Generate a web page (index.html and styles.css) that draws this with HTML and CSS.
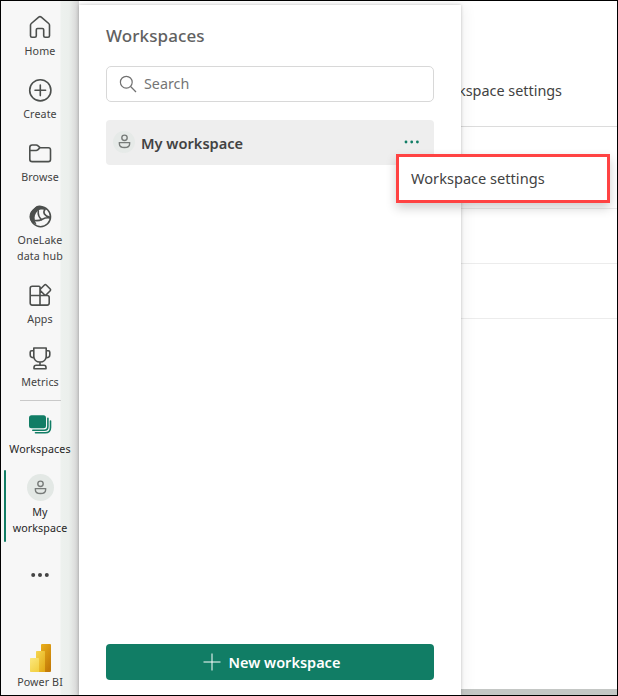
FILE: index.html
```html
<!DOCTYPE html>
<html lang="en">
<head>
<meta charset="utf-8">
<title>Power BI</title>
<link rel="stylesheet" href="styles.css">
</head>
<body>
<div class="window">
  <nav class="rail">
    <a class="item"><svg class="icon" viewBox="0 0 24 24"><path d="M2.500 10.200c0-.7.3-1.300.8-1.700l7.400-6.300c.8-.7 1.800-.7 2.600 0l7.400 6.300c.5.4.8 1 .8 1.700v10.600c0 .9-.6 1.500-1.500 1.500h-2.800c-.9 0-1.500-.6-1.500-1.500v-6c0-.8-.5-1.300-1.300-1.300H9.600c-.8 0-1.300.5-1.300 1.300v6c0 .9-.6 1.500-1.500 1.500H4c-.9 0-1.500-.6-1.500-1.500z"/></svg><span class="label">Home</span></a>
    <a class="item"><svg class="icon" viewBox="0 0 24 24"><circle cx="12.300" cy="12.300" r="10.600"/><path d="M12.300 7v10.600M7 12.300h10.600"/></svg><span class="label">Create</span></a>
    <a class="item"><svg class="icon" viewBox="0 0 24 24"><path d="M1.800 6.500C1.800 5 2.800 4 4.200 4h4c.6 0 1.200.2 1.600.6L12 6.700h8.400c1.200 0 2.100.9 2.100 2.100v9.700c0 1.200-.9 2.100-2.100 2.100H4.200c-1.400 0-2.400-1-2.400-2.400zM1.800 9.500h6.300c.7 0 1.200-.2 1.700-.7L12 6.700"/></svg><span class="label">Browse</span></a>
    <a class="item"><svg class="icon" viewBox="0 0 24 24"><circle cx="12.600" cy="12.800" r="9.900"/><path class="solid" d="M6.500 4.500C8 .3 16 .3 17.500 6c-3-.8-5.500-.7-7.700.8C7 9.500 6 13 7 16.500c.3 1.300.8 2.300 1.500 3.700C4 19.500 1.500 16.500 1.500 12.500 1.500 9 3.500 6 6.500 4.500z"/><path d="M10.300 6.800c-.5 4 .8 6.700 3.500 9M7.500 16.500c6.500 1 7.500-4 14.500-2.500M17 5.500c-2.500 3-.5 6.500 4.500 7.500"/></svg><span class="label">OneLake<br>data hub</span></a>
    <a class="item"><svg class="icon" viewBox="0 0 24 24"><path d="M12 12.500V4.200c0-.6-.3-.9-.9-.9H4.300C3 3.300 2.200 4.100 2.200 5.300v14.800c0 1.200.8 2 2 2h15c1.200 0 2-.8 2-2v-5.700c0-1.100-.8-1.900-1.900-1.900zM2.200 12.500H12v9.600M16.500 2c.5-.5 1.200-.5 1.700 0l4 4c.5.5.5 1.200 0 1.700l-4 4c-.5.5-1.200.5-1.700 0l-4-4c-.5-.5-.5-1.200 0-1.700z"/></svg><span class="label">Apps</span></a>
    <a class="item last"><svg class="icon" viewBox="0 0 24 24"><path d="M5.800 2h12.400v8.200c0 3.400-2.600 5.800-6.200 5.800s-6.200-2.400-6.200-5.800zM5.800 4.700H3.700c-.9 0-1.500.6-1.500 1.500v2.600c0 1.700 1.300 3 3.600 3M18.200 4.700h2.100c.9 0 1.500.6 1.500 1.500v2.600c0 1.700-1.300 3-3.600 3M12 16v3.300M6 22.700v-1.200c0-1.300.9-2.200 2.200-2.200h7.600c1.300 0 2.200.9 2.200 2.200v1.200z"/></svg><span class="label">Metrics</span></a>
    <hr class="rule">
    <a class="item"><svg class="icon stack" viewBox="0 0 24 24"><rect x="1" y="2.300" width="17" height="13" rx="2.500"/><path d="M4.800 17.300h11.400c2.400 0 3.700-1.300 3.700-3.700V5.200M7.500 19.800h9.700c3.300 0 5.300-2 5.300-5.300V8"/></svg><span class="label dark">Workspaces</span></a>
    <a class="item current"><span class="avatar"><svg class="person" viewBox="0 0 14 16"><circle cx="7" cy="4" r="2.900"/><path d="M1.500 9.200h11v1.500c0 2.200-2.300 3.800-5.500 3.800s-5.500-1.600-5.500-3.800z"/></svg></span><span class="label dark">My<br>workspace</span></a>
    <svg class="dots" viewBox="0 0 20 6"><circle cx="3.200" cy="3" r="2"/><circle cx="10" cy="3" r="2"/><circle cx="16.800" cy="3" r="2"/></svg>
    <a class="item brand"><svg class="powerbi" viewBox="0 0 21 28">
      <defs><linearGradient id="g1" x2=".6" y2="1"><stop stop-color="#eab01c"/><stop offset="1" stop-color="#c47b08"/></linearGradient><linearGradient id="g2" x2=".8" y2="1"><stop stop-color="#f6d650"/><stop offset="1" stop-color="#e4ac19"/></linearGradient><linearGradient id="g3" x2=".6" y2="1"><stop stop-color="#fbe77d"/><stop offset="1" stop-color="#f3d247"/></linearGradient></defs>
      <rect x="11" width="10" height="28" rx="1" fill="url(#g1)"/><path d="M6 8c0-.6.4-1 1-1h7c.6 0 1 .4 1 1v20H6z" fill="url(#g2)"/><path d="M0 15c0-.6.4-1 1-1h7c.6 0 1 .4 1 1v13H1c-.6 0-1-.4-1-1z" fill="url(#g3)"/></svg><span class="label">Power BI</span></a>
  </nav>
  <section class="panel">
    <h1 class="title">Workspaces</h1>
    <div class="search"><svg class="glass" viewBox="0 0 18 18"><circle cx="7.300" cy="7.200" r="5.900"/><path d="M11.600 11.500L17 17"/></svg><span class="placeholder">Search</span></div>
    <div class="row">
      <span class="avatar small"><svg class="person" viewBox="0 0 14 16"><circle cx="7" cy="4" r="2.900"/><path d="M1.500 9.200h11v1.500c0 2.200-2.300 3.800-5.500 3.800s-5.500-1.600-5.500-3.800z"/></svg></span>
      <span class="name">My workspace</span>
      <svg class="more" viewBox="0 0 16 4"><circle cx="2" cy="2" r="1.400"/><circle cx="7.700" cy="2" r="1.400"/><circle cx="13.400" cy="2" r="1.400"/></svg>
      <div class="menu">Workspace settings</div>
    </div>
    <button class="new"><svg class="plus" viewBox="0 0 18 18"><path d="M9 .5v17M.5 9h17"/></svg><span>New workspace</span></button>
  </section>
  <main class="content">
    <header class="toolbar"><span class="tool">kspace settings</span></header>
    <div class="line first"></div>
    <div class="line"></div>
    <div class="line"></div>
    <div class="scrollbar"></div>
  </main>
</div>
</body>
</html>
```
FILE: styles.css
```css
* { box-sizing: border-box; }
body { margin: 0; font-family: "Noto Sans", "Open Sans", sans-serif; color: #424242; }
.window {
  display: grid;
  grid-template-columns: 78px 382px 156px;
  width: 618px;
  height: 696px;
  border: 1px solid #000;
  background: #fff;
  overflow: hidden;
}
.rail {
  display: flex;
  flex-direction: column;
  align-items: center;
  padding: 14px 0 0;
  background: linear-gradient(90deg, #f7f7f7 59px, #edf1ee 60px, #ebefec 68px, #e0e1e0 74px, #d4d4d4 78px);
}
.item {
  display: flex;
  flex-direction: column;
  align-items: center;
  gap: 4px;
  width: 78px;
  padding-bottom: 19px;
}
.item.last { padding-bottom: 10px; }
.icon { width: 24px; height: 24px; fill: none; stroke: #4c4f4d; stroke-width: 1.6; stroke-linejoin: round; stroke-linecap: round; }
.icon .solid { fill: #4c4f4d; stroke: none; }
.label { font-size: 10.7px; line-height: 16px; letter-spacing: .1px; text-align: center; white-space: nowrap; }
.dark { color: #262626; }
.rule { width: 41px; height: 1px; margin: 0 0 12px; border: 0; background: #c9c9c9; }
.icon.stack { stroke: #117d65; }
.stack rect { fill: #117d65; stroke: none; }
.avatar { display: grid; place-items: center; width: 27px; height: 27px; border-radius: 50%; background: #e3e8e5; }
.person { width: 13px; height: 15px; fill: none; stroke: #777b79; stroke-width: 1.5; }
.current { position: relative; margin-top: -2px; padding-bottom: 0; gap: 3px; }
.current::before { content: ""; position: absolute; left: 3px; top: -4px; width: 2px; height: 72px; border-radius: 1px; background: #117d65; }
.dots { width: 20px; height: 6px; margin-top: 36px; fill: #444; }
.brand { margin-top: 66px; padding: 0; gap: 2px; }
.powerbi { width: 21px; height: 28px; }
.panel {
  display: flex;
  flex-direction: column;
  position: relative;
  z-index: 1;
  margin-top: 4px;
  padding: 19px 27px 15px;
  background: #fff;
  box-shadow: 0 0 3px #00000038, 2px 0 14px #00000012;
}
.title { margin: 0; font-size: 17px; line-height: 24px; font-weight: 500; letter-spacing: .1px; color: #616161; }
.search { display: flex; align-items: center; gap: 7px; height: 36px; margin-top: 18px; padding: 0 12px; border: 1px solid #d8d8d8; border-radius: 5px; }
.glass { width: 18px; height: 18px; fill: none; stroke: #707070; stroke-width: 1.2; }
.placeholder { padding-bottom: 1px; font-size: 14.3px; color: #757575; }
.row { position: relative; display: flex; align-items: center; height: 45px; margin-top: 18px; padding: 0 14px 0 7px; border-radius: 4px; background: #eee; }
.small { width: 22px; height: 22px; margin-top: -2px; background: #e6eae8; }
.small .person { width: 13px; height: 15px; }
.name { flex: 1; margin-left: 6px; font-size: 14.6px; font-weight: 600; }
.more { width: 16px; height: 4px; margin-top: -2px; fill: #117d65; }
.menu {
  position: absolute;
  left: 290px;
  top: 34px;
  width: 214px;
  height: 49px;
  padding-left: 12px;
  border: 3px solid #ff4343;
  background: #fff;
  font-size: 14.6px;
  line-height: 43px;
  white-space: nowrap;
  box-shadow: 0 5px 10px #00000030;
}
.new { display: flex; align-items: center; justify-content: center; gap: 8px; height: 36px; margin-top: auto; padding: 0 0 0 3px; border: 0; border-radius: 4px; background: #117d65; color: #fff; font: 600 14.5px "Noto Sans", sans-serif; }
.plus { width: 18px; height: 18px; fill: none; stroke: #fff; stroke-width: 1; }
.content { display: flex; flex-direction: column; overflow: hidden; }
.toolbar { flex: none; height: 126px; padding-top: 78px; border-bottom: 1px solid #dcdcdc; }
.tool { display: block; margin-left: -3px; font-size: 14.4px; line-height: 24px; white-space: nowrap; }
.line { flex: none; height: 55px; border-bottom: 1px solid #ececec; }
.line.first { height: 82px; }
.scrollbar { height: 6px; margin-top: auto; background: #c4c7c5; }
```
